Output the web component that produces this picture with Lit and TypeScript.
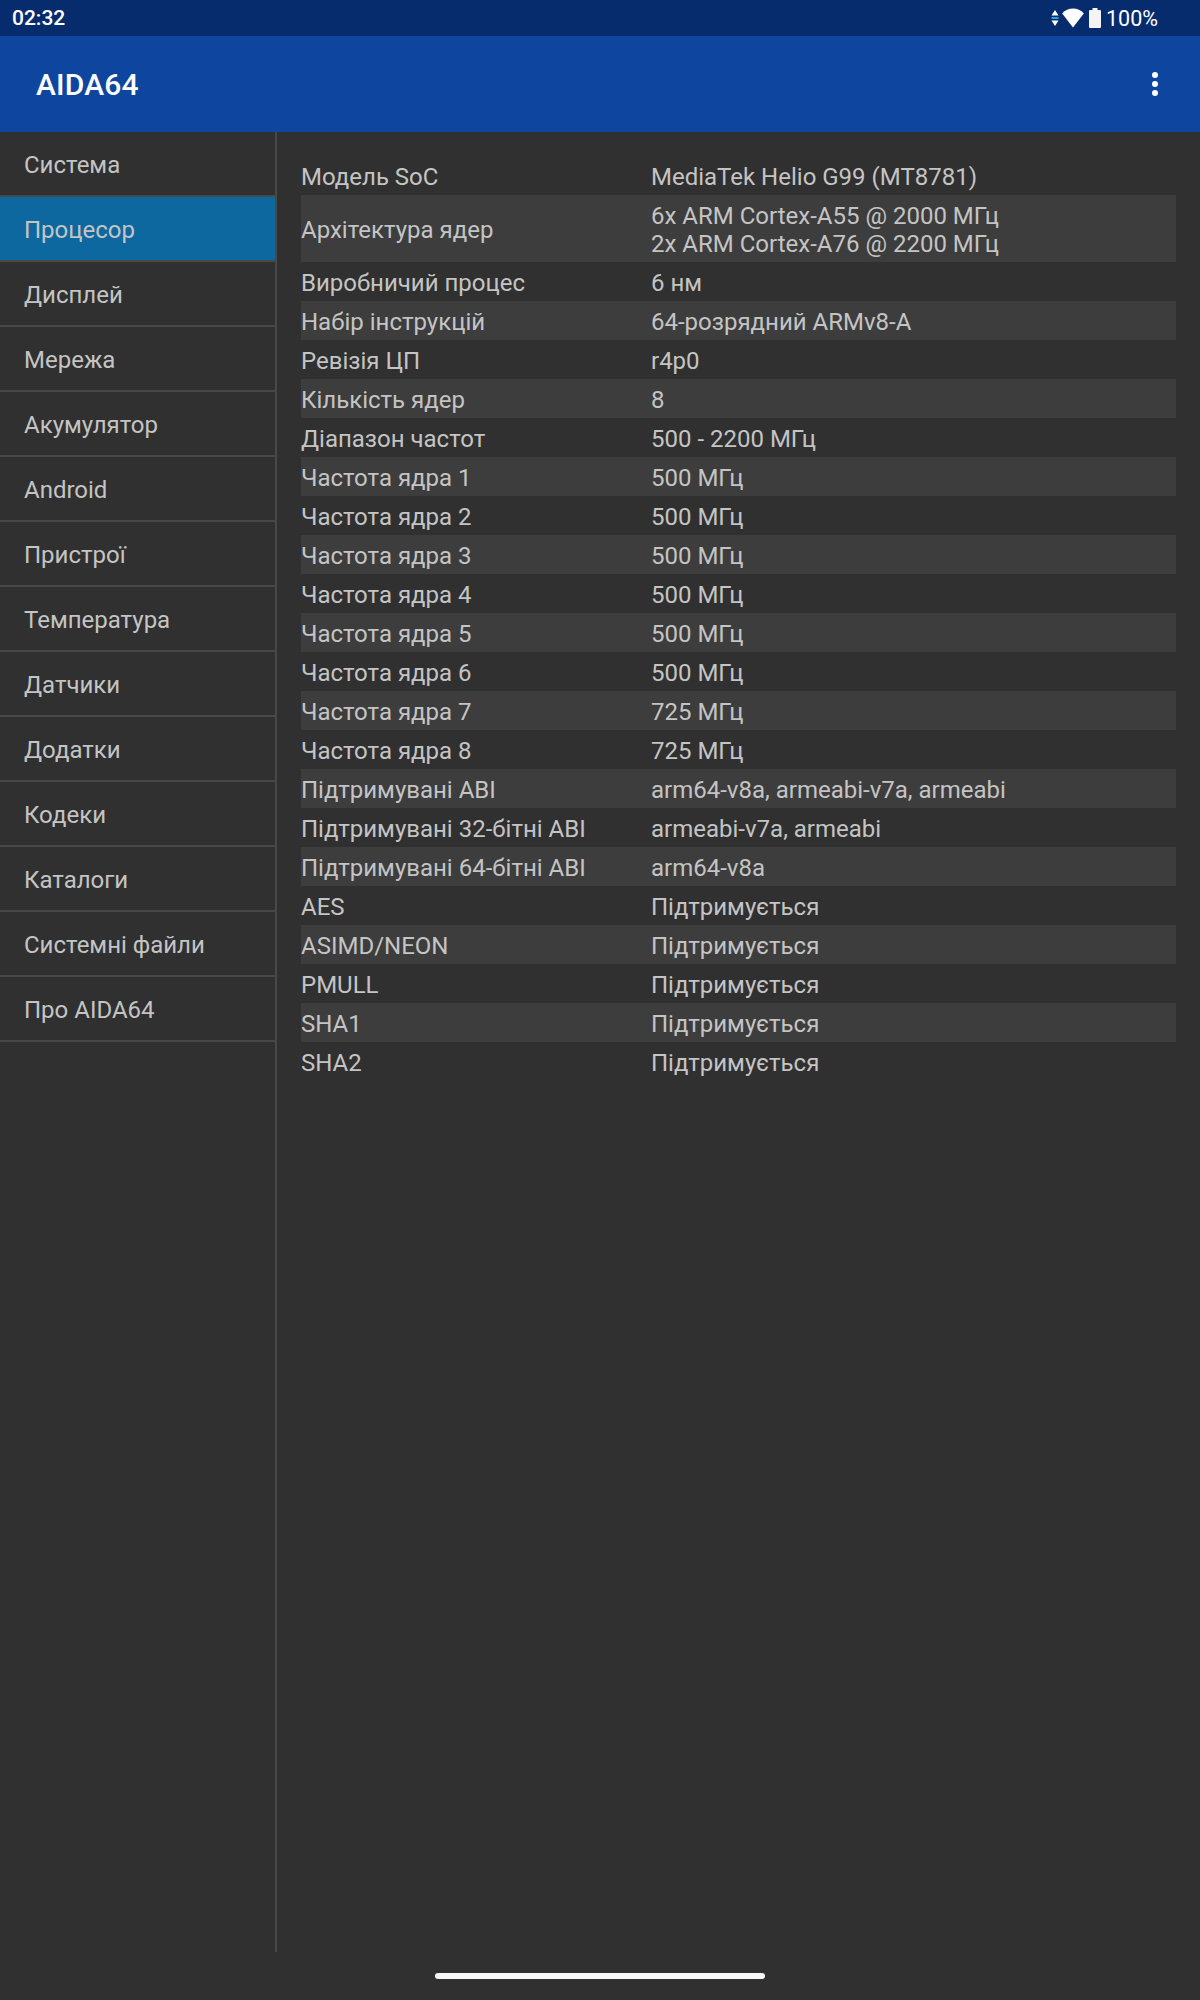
import { LitElement, html, css } from "lit";
import { customElement } from "lit/decorators.js";

const NAV = ["Система","Процесор","Дисплей","Мережа","Акумулятор","Android","Пристрої","Температура","Датчики","Додатки","Кодеки","Каталоги","Системні файли","Про AIDA64"];
const S = "Підтримується";
const ROWS: [string, string[]][] = [
  ["Модель SoC",["MediaTek Helio G99 (MT8781)"]],
  ["Архітектура ядер",["6x ARM Cortex-A55 @ 2000 МГц","2x ARM Cortex-A76 @ 2200 МГц"]],
  ["Виробничий процес",["6 нм"]],
  ["Набір інструкцій",["64-розрядний ARMv8-A"]],
  ["Ревізія ЦП",["r4p0"]],
  ["Кількість ядер",["8"]],
  ["Діапазон частот",["500 - 2200 МГц"]],
  ["Частота ядра 1",["500 МГц"]],
  ["Частота ядра 2",["500 МГц"]],
  ["Частота ядра 3",["500 МГц"]],
  ["Частота ядра 4",["500 МГц"]],
  ["Частота ядра 5",["500 МГц"]],
  ["Частота ядра 6",["500 МГц"]],
  ["Частота ядра 7",["725 МГц"]],
  ["Частота ядра 8",["725 МГц"]],
  ["Підтримувані ABI",["arm64-v8a, armeabi-v7a, armeabi"]],
  ["Підтримувані 32-бітні ABI",["armeabi-v7a, armeabi"]],
  ["Підтримувані 64-бітні ABI",["arm64-v8a"]],
  ["AES",[S]],["ASIMD/NEON",[S]],["PMULL",[S]],["SHA1",[S]],["SHA2",[S]],
];

@customElement("app-root")
export class AppRoot extends LitElement {
  static styles = css`
    :host { display: block; width: 1200px; height: 2000px; background: #303030; font-family: Roboto, "Liberation Sans", sans-serif; color: #c4c4c4; position: relative; overflow: hidden; }
    .status { height: 36px; background: #072c6d; color: #fff; display: flex; align-items: center; padding: 0 42px 0 12px; font-size: 21px; font-weight: 500; box-sizing: border-box; }
    .time { flex: 1; }
    .icons { display: flex; align-items: center; }
    .wifi { margin-left: 3px; }
    .batt { margin-left: 5px; }
    .pct { font-weight: 400; margin-left: 5px; font-size: 21.5px; }
    .toolbar { height: 96px; background: #0d459f; color: #fff; display: flex; align-items: center; padding: 0 42px 0 36px; font-size: 30px; font-weight: 500; box-sizing: border-box; justify-content: space-between; }
    .title { letter-spacing: 0.2px; }
    .dots { display: flex; flex-direction: column; gap: 3px; }
    .dots i { width: 6px; height: 6px; background: #fff; border-radius: 50%; display: block; }
    .main { display: flex; align-items: flex-start; }
    .side { width: 275px; border-right: 2px solid #484848; height: 1820px; flex: none; }
    .nav { height: 65px; box-sizing: border-box; border-bottom: 2px solid #484848; padding: 2px 0 0 24px; display: flex; align-items: center; font-size: 24px; }
    .nav.sel { background: #0d689f; }
    .table { padding: 24px 0 0 24px; width: 875px; }
    .row { display: flex; align-items: center; height: 39px; box-sizing: border-box; padding-top: 2px; font-size: 24px; line-height: 28px; }
    .row:nth-child(even) { background: #3d3d3d; }
    .row.two { height: 67px; }
    .k { width: 350px; flex: none; }
    .home { position: absolute; left: 435px; top: 1973px; width: 330px; height: 6px; border-radius: 3px; background: #f8f8f8; }
  `;
  render() {
    return html`
      <div class="status">
        <span class="time">02:32</span>
        <span class="icons">
          <svg width="8" height="16" viewBox="0 0 8 16">
            <path d="M4 0 L7.5 5.5 H.5Z M4 16 L.5 10.5 H7.5Z" fill="#fff"/><rect x=".5" y="7" width="7" height="2" fill="#2a9fd8"/>
          </svg>
          <svg class="wifi" width="22" height="20" viewBox="0 0 22 20">
            <path d="M11 19.5 L.2 5.5 C3 2.2 6.8 .5 11 .5 S19 2.2 21.8 5.5Z" fill="#fff"/>
          </svg>
          <svg class="batt" width="12" height="20" viewBox="0 0 12 20">
            <path d="M3.5 0 H8.5 V2 H11 Q12 2 12 3 V19 Q12 20 11 20 H1 Q0 20 0 19 V3 Q0 2 1 2 H3.5Z" fill="#f4f4f4"/>
          </svg>
          <span class="pct">100%</span>
        </span>
      </div>
      <div class="toolbar">
        <span class="title">AIDA64</span>
        <span class="dots"><i></i><i></i><i></i></span>
      </div>
      <div class="main">
        <div class="side">
          ${NAV.map((n, i) => html`<div class="nav ${i === 1 ? "sel" : ""}">${n}</div>`)}
        </div>
        <div class="table">
          ${ROWS.map(([k, v]) => html`<div class="row ${v.length > 1 ? "two" : ""}"><div class="k">${k}</div><div class="v">${v.map((l) => html`<div>${l}</div>`)}</div></div>`)}
        </div>
      </div>
      <div class="home"></div>
    `;
  }
}
